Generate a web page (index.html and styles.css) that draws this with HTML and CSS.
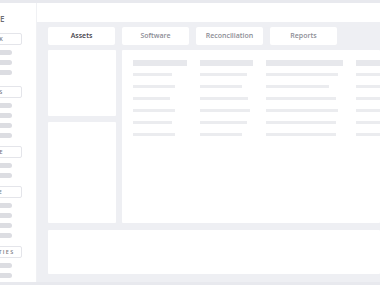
FILE: index.html
```html
<!DOCTYPE html>
<html>
<head>
<meta charset="utf-8">
<link rel="stylesheet" href="styles.css">
</head>
<body>
<div class="strip"></div>
<div class="app">
  <aside class="sidebar">
    <div class="side-inner">
      <div class="heading"><span>SCOPE</span></div>
      <div class="group first">
        <div class="box">STOCK</div>
        <div class="pill"></div><div class="pill"></div><div class="pill"></div>
      </div>
      <div class="group g2">
        <div class="box">USERS</div>
        <div class="pill"></div><div class="pill"></div><div class="pill"></div><div class="pill"></div>
      </div>
      <div class="group">
        <div class="box">SCOPE</div>
        <div class="pill"></div><div class="pill"></div>
      </div>
      <div class="group">
        <div class="box">STATE</div>
        <div class="pill"></div><div class="pill"></div><div class="pill"></div><div class="pill"></div>
      </div>
      <div class="group">
        <div class="box">PROPERTIES</div>
        <div class="pill"></div><div class="pill"></div>
      </div>
    </div>
  </aside>
  <main class="main">
    <nav class="tabs">
      <div class="tab active">Assets</div>
      <div class="tab">Software</div>
      <div class="tab">Reconciliation</div>
      <div class="tab">Reports</div>
    </nav>
    <div class="content">
      <div class="leftcol">
        <div class="panel p1"></div>
        <div class="panel p2"></div>
      </div>
      <div class="panel table">
        <div class="col">
          <div class="hbar"></div>
          <div class="bar" style="width:39px"></div>
          <div class="bar" style="width:42px"></div>
          <div class="bar" style="width:37px"></div>
          <div class="bar" style="width:42px"></div>
          <div class="bar" style="width:39px"></div>
          <div class="bar" style="width:42px"></div>
        </div>
        <div class="col">
          <div class="hbar"></div>
          <div class="bar" style="width:47px"></div>
          <div class="bar" style="width:42px"></div>
          <div class="bar" style="width:48px"></div>
          <div class="bar" style="width:50px"></div>
          <div class="bar" style="width:47px"></div>
          <div class="bar" style="width:42px"></div>
        </div>
        <div class="col">
          <div class="hbar"></div>
          <div class="bar" style="width:72px"></div>
          <div class="bar" style="width:63px"></div>
          <div class="bar" style="width:70px"></div>
          <div class="bar" style="width:72px"></div>
          <div class="bar" style="width:70px"></div>
          <div class="bar" style="width:70px"></div>
        </div>
        <div class="col">
          <div class="hbar"></div>
          <div class="bar" style="width:50px"></div>
          <div class="bar" style="width:46px"></div>
          <div class="bar" style="width:50px"></div>
          <div class="bar" style="width:50px"></div>
          <div class="bar" style="width:48px"></div>
          <div class="bar" style="width:50px"></div>
        </div>
      </div>
    </div>
    <div class="panel bottom"></div>
  </main>
</div>
<div class="strip"></div>
</body>
</html>
```

FILE: styles.css
```css
html, body {
  margin: 0;
  padding: 0;
  background: #ffffff;
  width: 380px;
  height: 285px;
  overflow: hidden;
  font-family: "Open Sans", "Liberation Sans", sans-serif;
}

.strip {
  height: 3px;
  background: #e8e9ee;
}

.app {
  display: flex;
  height: 279px;
}

.sidebar {
  width: 37px;
  flex: none;
  overflow: hidden;
  background: #ffffff;
  border-right: 1px solid #f0f1f4;
  box-sizing: border-box;
}

.side-inner {
  width: 60px;
  margin-left: -38px;
  display: flex;
  flex-direction: column;
}

.heading {
  margin-top: 10px;
  height: 12px;
  display: flex;
  justify-content: flex-end;
  padding-right: 17px;
  font-size: 8px;
  line-height: 12px;
  font-weight: 600;
  color: #6b6c74;
  letter-spacing: 0.5px;
  white-space: nowrap;
}

.heading span {
  flex: none;
}

.group {
  display: flex;
  flex-direction: column;
  align-items: flex-end;
  gap: 5px;
  margin-top: 8px;
}

.group.first { margin-top: 8px; }
.group.g2 { margin-top: 11px; }

.box {
  width: 60px;
  height: 12px;
  box-sizing: border-box;
  border: 1px solid #e4e5ea;
  border-radius: 2px;
  font-size: 5.5px;
  line-height: 10px;
  font-weight: 600;
  letter-spacing: 1.3px;
  color: #7a7b83;
  text-align: center;
  white-space: nowrap;
  background: #fff;
}

.pill {
  width: 40px;
  height: 5px;
  margin-right: 10px;
  border-radius: 3px;
  background: #dcdde2;
}

.main {
  flex: 1;
  margin-top: 19px;
  background: #eeeff3;
  padding: 5px 0 8px 11px;
  display: flex;
  flex-direction: column;
  gap: 6px;
  min-width: 0;
}

.tabs {
  display: flex;
  gap: 7px;
}

.tab {
  width: 67px;
  height: 18px;
  background: #ffffff;
  border-radius: 2px;
  font-size: 7px;
  font-weight: 600;
  line-height: 18px;
  text-align: center;
  color: #8c8d95;
}

.tab.active {
  color: #3f4048;
}

.content {
  display: flex;
  gap: 6px;
  height: 173px;
  margin-top: -1px;
}

.leftcol {
  width: 68px;
  flex: none;
  display: flex;
  flex-direction: column;
  gap: 6px;
}

.panel {
  background: #ffffff;
  border-radius: 1px;
}

.p1 { height: 66px; }
.p2 { flex: 1; }

.table {
  flex: 1;
  display: flex;
  gap: 13px;
  padding: 10px 0 0 11px;
  overflow: hidden;
}

.col {
  flex: none;
  display: flex;
  flex-direction: column;
  gap: 9px;
}

.col:nth-child(1) { width: 54px; }
.col:nth-child(2) { width: 53px; }
.col:nth-child(3) { width: 77px; }
.col:nth-child(4) { width: 60px; }

.hbar {
  width: 100%;
  height: 6px;
  background: #e7e8ec;
  margin-bottom: -2px;
}

.bar {
  height: 3px;
  background: #ebecef;
}

.bottom {
  height: 44px;
  margin-top: 1px;
}
```
